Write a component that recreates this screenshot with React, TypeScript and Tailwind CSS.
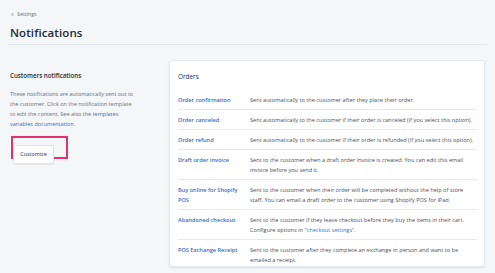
const rows = [
  {
    title: "Order confirmation",
    text: "Sent automatically to the customer after they place their order.",
  },
  {
    title: "Order canceled",
    text: "Sent automatically to the customer if their order is canceled (if you select this option).",
  },
  {
    title: "Order refund",
    text: "Sent automatically to the customer if their order is refunded (if you select this option).",
  },
  {
    title: "Draft order invoice",
    text: "Sent to the customer when a draft order invoice is created. You can edit this email invoice before you send it.",
  },
  {
    title: "Buy online for Shopify POS",
    text: "Sent to the customer when their order will be completed without the help of store",
    rest: "staff. You can email a draft order to the customer using Shopify POS for iPad.",
  },
  {
    title: "Abandoned checkout",
    text: "Sent to the customer if they leave checkout before they buy the items in their cart. Configure options in ",
    link: "\"checkout settings\"",
    after: ".",
  },
  {
    title: "POS Exchange Receipt",
    text: "Sent to the customer after they complete an exchange in person and want to be emailed a receipt.",
  },
];

export default function App() {
  return (
    <div className="w-[495px] h-[273px] overflow-hidden bg-[#f4f6f8] font-['Open_Sans',sans-serif] text-[#212b36]">
      {/* header */}
      <header className="mx-[8px] border-b border-[#e3e6e9] px-[2px] pt-[10px] pb-[4px]">
        <div className="flex items-center gap-[2px] text-[5.3px] leading-[8px] text-[#637381]">
          <svg width="5" height="5" viewBox="0 0 10 10" fill="none">
            <path d="M6.5 2 L3.5 5 L6.5 8" stroke="#637381" strokeWidth="1.4" />
          </svg>
          Settings
        </div>
        <h1 className="mt-[8px] text-[11.5px] leading-[14px] font-semibold tracking-[0.1px]">
          Notifications
        </h1>
      </header>

      <main className="flex mt-[15px] pl-[10px]">
        <section className="w-[130px] pt-[10px]">
          <h2 className="text-[6.2px] leading-[12px] font-semibold">Customers notifications</h2>
          <p className="mt-[7px] w-[128px] text-[5.5px] leading-[10px] text-[#637381]">
            These notifications are automatically sent out to the customer. Click on the notification
            template to edit the content. See also the{" "}
            <a className="text-[#2f6fc4]">templates variables documentation</a>.
          </p>
          <div className="mt-[7px] ml-[1px] w-[57px] h-[23px] border-2 border-[#e0356c]">
            <button className="w-[41px] h-[19px] bg-white border border-[#dfe3e8] shadow-[0_1px_1px_rgba(0,0,0,0.06)] rounded-[2px] text-[5.4px] text-[#212b36]">
              Customize
            </button>
          </div>
        </section>

        <section className="ml-[29px] w-[316px] h-[207px] bg-white rounded-[3px] border border-[#e6e9ec] shadow-[0_1px_2px_rgba(63,63,68,0.12)] pt-[10px] pl-[8px] pr-[7px]">
          <h3 className="text-[6.4px] leading-[12px]">Orders</h3>
          <div className="mt-[7px]">
            {rows.map((r, i) => (
              <div
                key={r.title}
                className={
                  "flex py-[4.5px] text-[5.6px] leading-[10px] " +
                  (i < rows.length - 1 ? "border-b border-[#e6e9ec]" : "")
                }
              >
                <div className="w-[72px] shrink-0 pr-[6px] font-semibold text-[#2f6fc4]">{r.title}</div>
                <div className="flex-1 -mr-[2px] text-[#454f5b]">
                  {r.text}
                  {r.rest && (
                    <>
                      <br />
                      {r.rest}
                    </>
                  )}
                  {r.link && <span className="text-[#2f6fc4]">{r.link}</span>}
                  {r.after}
                </div>
              </div>
            ))}
          </div>
        </section>
      </main>
    </div>
  );
}
